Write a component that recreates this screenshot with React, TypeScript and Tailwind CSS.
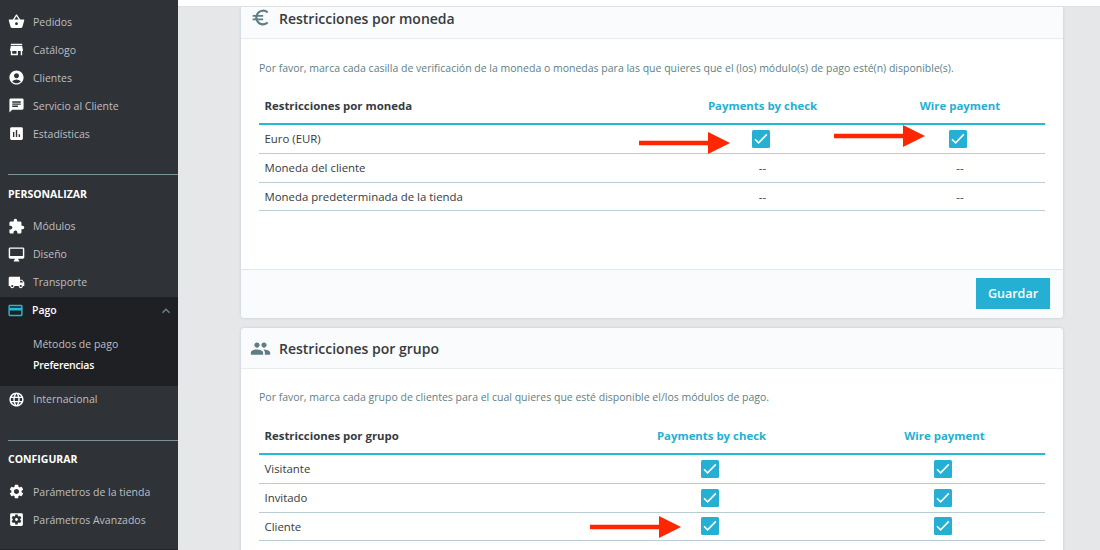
import React from 'react';
import {
  MdAccountCircle,
  MdAssessment,
  MdChat,
  MdEuroSymbol,
  MdExtension,
  MdKeyboardArrowUp,
  MdLanguage,
  MdLocalShipping,
  MdPayment,
  MdPeople,
  MdSettings,
  MdSettingsApplications,
  MdStore,
} from 'react-icons/md';

type IconComponent = React.ComponentType<{ className?: string }>;

const BasketIcon: IconComponent = ({ className }) => (
  <svg viewBox="0 0 24 24" fill="currentColor" className={className}>
    <path d="M17.21 9l-4.38-6.56c-.19-.28-.51-.42-.83-.42-.32 0-.64.14-.83.43L6.79 9H2c-.55 0-1 .45-1 1 0 .09.01.18.04.27l2.54 9.27c.23.84 1 1.46 1.92 1.46h13c.92 0 1.69-.62 1.93-1.46l2.54-9.27L23 10c0-.55-.45-1-1-1h-4.79zM9 9l3-4.4L15 9H9zm3 8c-1.1 0-2-.9-2-2s.9-2 2-2 2 .9 2 2-.9 2-2 2z" />
  </svg>
);

const DesktopIcon: IconComponent = ({ className }) => (
  <svg viewBox="0 0 24 24" fill="currentColor" className={className}>
    <path d="M21 2H3c-1.1 0-2 .9-2 2v12c0 1.1.9 2 2 2h7l-2 3v1h8v-1l-2-3h7c1.1 0 2-.9 2-2V4c0-1.1-.9-2-2-2zm0 12H3V4h18v10z" />
  </svg>
);

const NavItem: React.FC<{ icon: IconComponent; label: string }> = ({ icon: Icon, label }) => (
  <a href="#" className="flex h-7 items-center pl-[7.5px] text-[10.5px] text-[#bebfc1]">
    <Icon className="mb-px size-[17px] shrink-0 text-white" />
    <span className="ml-[8.5px] pt-px whitespace-nowrap">{label}</span>
  </a>
);

const NavHeading: React.FC<{ label: string }> = ({ label }) => (
  <div className="ml-2 flex h-[38.5px] items-center border-t border-[#7c929a] pt-[2px] text-[10.5px] font-bold text-white">{label}</div>
);

const Sidebar: React.FC = () => (
  <nav className="h-full w-[178px] shrink-0 overflow-hidden border-b border-[#25242b] bg-[#2f3237] pt-2">
    <NavItem icon={BasketIcon} label="Pedidos" />
    <NavItem icon={MdStore} label="Catálogo" />
    <NavItem icon={MdAccountCircle} label="Clientes" />
    <NavItem icon={MdChat} label="Servicio al Cliente" />
    <NavItem icon={MdAssessment} label="Estadísticas" />

    <div className="h-[26px]" />
    <NavHeading label="PERSONALIZAR" />
    <NavItem icon={MdExtension} label="Módulos" />
    <NavItem icon={DesktopIcon} label="Diseño" />
    <NavItem icon={MdLocalShipping} label="Transporte" />

    <div className="h-[89px] bg-[#1e2023] text-[10.5px]">
      <a href="#" className="flex h-7 items-center pl-[7px] font-semibold text-white">
        <MdPayment className="size-[17px] shrink-0 text-[#25b9d7]" />
        <span className="ml-2">Pago</span>
        <MdKeyboardArrowUp className="mr-1 ml-auto size-4 text-[#6c868e]" />
      </a>
      <div className="flex flex-col pt-[9.5px] pl-[33px]">
        <a href="#" className="flex h-[21px] items-center text-[#bebfc1]">Métodos de pago</a>
        <a href="#" className="flex h-[21px] items-center font-semibold tracking-[-0.2px] text-white">Preferencias</a>
      </div>
    </div>
    <NavItem icon={MdLanguage} label="Internacional" />

    <div className="h-[26px]" />
    <NavHeading label="CONFIGURAR" />
    <NavItem icon={MdSettings} label="Parámetros de la tienda" />
    <NavItem icon={MdSettingsApplications} label="Parámetros Avanzados" />
  </nav>
);

const Check: React.FC = () => (
  <span className="relative -left-[2px] flex size-[18px] items-center justify-center rounded-[1.5px] bg-[#25b0d3]">
    <svg viewBox="0 0 18 18" className="size-[18px]" fill="none" stroke="#fff" strokeWidth="1.6">
      <path d="M3 9.2l3.6 3.6 8.2-8.4" />
    </svg>
  </span>
);

const Arrow: React.FC<{ className: string }> = ({ className }) => (
  <svg viewBox="0 0 91 22" className={`absolute z-10 h-[22px] w-[91px] ${className}`} fill="#ff2600">
    <path d="M0 8.7h69V0l22 11-22 11v-8.7H0z" />
  </svg>
);

type TableProps = {
  title: string;
  cols: string;
  rows: { label: string; checked: boolean }[];
};

const RestrictionTable: React.FC<TableProps> = ({ title, cols, rows }) => (
  <div className="text-[11.4px] text-[#363a41]">
    <div className={`grid h-[37px] items-center border-b-2 border-[#25b9d7] pt-[0.5px] font-bold ${cols}`}>
      <div className="pl-[5.5px]">{title}</div>
      <div className="text-center text-[#25b0d3]">Payments by check</div>
      <div className="text-center text-[#25b0d3]">Wire payment</div>
    </div>
    {rows.map((row) => (
      <div key={row.label} className={`grid h-[28.8px] items-center border-b border-[#bbcdd2] ${cols}`}>
        <div className="pl-[5.5px]">{row.label}</div>
        <div className="flex justify-center">{row.checked ? <Check /> : '--'}</div>
        <div className="flex justify-center">{row.checked ? <Check /> : '--'}</div>
      </div>
    ))}
  </div>
);

const currencyRows = [
  { label: 'Euro (EUR)', checked: true },
  { label: 'Moneda del cliente', checked: false },
  { label: 'Moneda predeterminada de la tienda', checked: false },
];

const groupRows = [
  { label: 'Visitante', checked: true },
  { label: 'Invitado', checked: true },
  { label: 'Cliente', checked: true },
];

export default function App() {
  return (
    <div className="relative flex h-[550px] w-[1100px] overflow-hidden bg-[#e6e7e9] font-['Open_Sans',sans-serif]">
      <Sidebar />

      <div className="flex min-w-0 flex-1 flex-col">
        <header className="h-[7px] shrink-0 border-b border-[#dfe1e3] bg-white" />

        <main className="flex min-h-0 flex-1 flex-col gap-[10px] overflow-hidden pr-[37px] pl-[63px]">
          <section className="flex h-[311px] shrink-0 flex-col rounded-b-[4px] bg-white shadow-[0_0_3px_0_#bccdd3]">
            <div className="flex h-8 items-center border-b border-[#e6edf0] bg-[#fafbfc] pb-2 pl-[9px]">
              <MdEuroSymbol className="relative -top-px size-[21px] text-[#5f7d85]" />
              <h2 className="ml-2 text-[14px] font-semibold text-[#363a41]">Restricciones por moneda</h2>
            </div>
            <div className="flex-1 px-[18px] pt-[20px]">
              <p className="mb-[10px] h-[19px] text-[10.5px] leading-[18px] whitespace-nowrap text-[#607f86]">
                Por favor, marca cada casilla de verificación de la moneda o monedas para las que quieres que el (los) módulo(s) de pago esté(n) disponible(s).
              </p>
              <RestrictionTable title="Restricciones por moneda" cols="grid-cols-[392px_223px_172px]" rows={currencyRows} />
            </div>
            <div className="flex h-[49px] items-start justify-end rounded-b-[4px] border-t border-[#dfe7ea] bg-[#fafbfc] pt-2 pr-[13px]">
              <button className="h-[31px] w-[74px] bg-[#25b0d3] pt-[2px] text-[12.5px] font-semibold text-white">Guardar</button>
            </div>
          </section>

          <section className="h-[260px] shrink-0 rounded-t-[4px] bg-white shadow-[0_0_3px_0_#bccdd3]">
            <div className="flex h-[41px] items-center rounded-t-[4px] border-b border-[#e6edf0] bg-[#fafbfc] pl-[9px]">
              <MdPeople className="size-[21px] text-[#5f7d85]" />
              <h2 className="ml-2 text-[14px] font-semibold text-[#363a41]">Restricciones por grupo</h2>
            </div>
            <div className="px-[18px] pt-[19px]">
              <p className="mb-[11px] h-[19px] text-[10.5px] leading-[19px] whitespace-nowrap text-[#607f86]">
                Por favor, marca cada grupo de clientes para el cual quieres que esté disponible el/los módulos de pago.
              </p>
              <RestrictionTable title="Restricciones por grupo" cols="grid-cols-[321px_263px_203px]" rows={groupRows} />
            </div>
          </section>
        </main>
      </div>

      {/* Callouts over the checkboxes */}
      <Arrow className="top-[132px] left-[639px]" />
      <Arrow className="top-[125px] left-[834px]" />
      <Arrow className="top-[516px] left-[590px]" />
    </div>
  );
}
